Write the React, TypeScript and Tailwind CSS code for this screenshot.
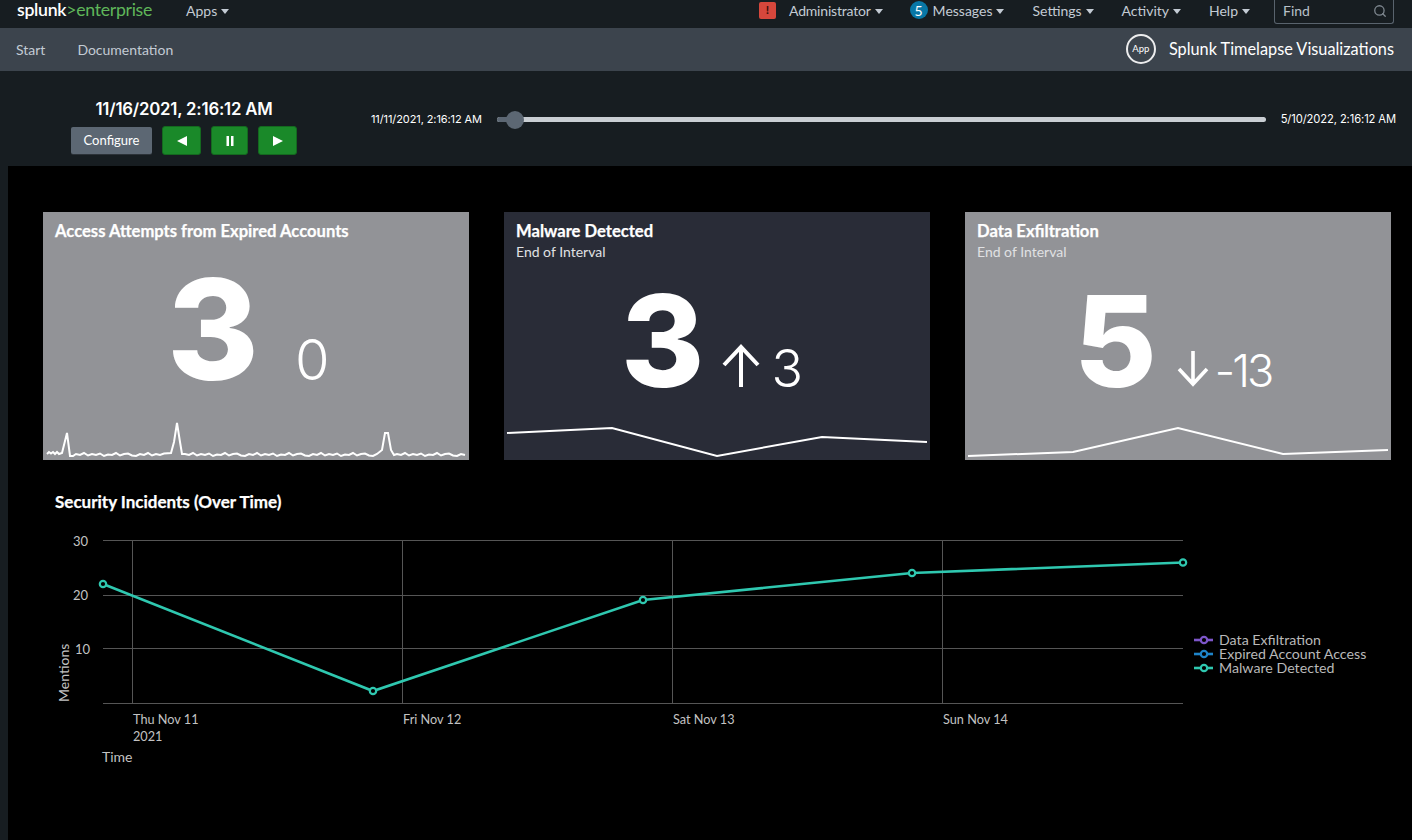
import type { ReactNode } from "react";
import { Search } from "lucide-react";

const navItems = ["Settings", "Activity"];

// noisy baseline between the spikes of the first sparkline
const wiggle = [34, 35, 33, 35.5, 34, 35, 33.5, 36, 34.5, 35, 33, 35.5, 34, 33.5, 35.5, 36];

function noise(from: number, to: number) {
  const out: string[] = [];
  let i = 0;
  for (let x = from; x < to; x += 4) {
    out.push(`L${x} ${wiggle[i % wiggle.length]}`);
    i += 1;
  }
  return out.join(" ");
}

const spike = [
  `M4 34 L6 32 L8 33.5 L10 32 L12 34 L14 32 L16 34 L19 33 L24 13 L27 36 L30 36`,
  noise(33, 124),
  `L128 33 L131 22 L134 3 L137 22 L139 34`,
  noise(142, 338),
  `L339 30 L342 13 L345 13 L348 30 L351 35`,
  noise(354, 424),
].join(" ");

function Caret() {
  return (
    <span className="inline-block w-0 h-0 ml-[4px] mb-[1px] border-x-[4px] border-x-transparent border-t-[5px] border-t-[#c3cbd4] align-middle" />
  );
}

function TopNav() {
  return (
    <header className="h-[28px] pb-[8px] bg-[#171d21] flex items-center pl-[17px] pr-[18px] text-[#c3cbd4] text-[14px]">
      <div className="text-[17.7px] leading-none tracking-[-0.3px] w-[169px]">
        <span className="text-white font-semibold">splunk</span>
        <span className="text-[#5fb65a]">&gt;enterprise</span>
      </div>
      <span>
        Apps
        <Caret />
      </span>
      <div className="ml-auto flex items-center">
        <span className="w-[17px] h-[17px] mr-[13px] rounded-[2px] bg-[#d6473c] text-[#3d0f0b] text-[12px] font-bold flex items-center justify-center">
          !
        </span>
        <span className="mr-[27px] tracking-[-0.2px]">
          Administrator
          <Caret />
        </span>
        <span className="w-[18px] h-[18px] mr-[5px] rounded-full bg-[#0877a6] text-white flex items-center justify-center text-[14px]">
          5
        </span>
        <span className="mr-[28px]">
          Messages
          <Caret />
        </span>
        {navItems.map((item) => (
          <span key={item} className="mr-[28px]">
            {item}
            <Caret />
          </span>
        ))}
        <span className="mr-[24px]">
          Help
          <Caret />
        </span>
        <div className="w-[120px] h-[24px] -mb-[4px] pb-[2px] border border-[#59636d] border-t-0 rounded-b-[3px] flex items-center justify-between pl-[8px] pr-[6px] text-[#b8c0c8]">
          Find
          <Search className="w-[14px] h-[14px] text-[#7f8890]" strokeWidth={2.2} />
        </div>
      </div>
    </header>
  );
}

function AppBar() {
  return (
    <nav className="h-[43px] pb-[1px] bg-[#3c444d] flex items-center pl-[16px] pr-[18px] text-[14px] text-[#c3cbd4]">
      <span className="mr-[32px]">Start</span>
      <span>Documentation</span>
      <div className="ml-auto flex items-center gap-[13px]">
        <span className="w-[30px] h-[30px] rounded-full border-2 border-white/90 text-white text-[9.5px] flex items-center justify-center">
          App
        </span>
        <span className="text-white text-[16.3px]">Splunk Timelapse Visualizations</span>
      </div>
    </nav>
  );
}

function Transport({ children, width }: { children: ReactNode; width: string }) {
  return (
    <button className={`${width} h-[29px] rounded-[3px] bg-[#1a8929] border border-[#14691f] flex items-center justify-center`}>
      {children}
    </button>
  );
}

function Controls() {
  return (
    <section className="h-[95px] bg-[#171d21] flex pl-[71px] pr-[16px]">
      <div className="w-[226px] pt-[28px] flex flex-col items-center">
        <div className="text-white font-['Inter',sans-serif] font-semibold text-[16.8px] leading-[20px] tracking-[-0.2px] whitespace-nowrap">
          11/16/2021, 2:16:12 AM
        </div>
        <div className="flex items-center mt-[7px] w-full">
          <button className="w-[81px] h-[27px] rounded-[2px] bg-[#5c6773] text-white text-[13px] shadow-[0_1px_0_#2c3238]">
            Configure
          </button>
          <div className="ml-[10px] flex gap-[10px]">
            <Transport width="w-[39px]">
              <svg width="10" height="10" viewBox="0 0 10 10">
                <path d="M0 5 L10 0 V10 Z" fill="#fff" />
              </svg>
            </Transport>
            <Transport width="w-[37px]">
              <svg width="8" height="10" viewBox="0 0 8 10">
                <path d="M0.5 0H3V10H0.5ZM5 0H7.5V10H5Z" fill="#fff" />
              </svg>
            </Transport>
            <Transport width="w-[39px]">
              <svg width="10" height="10" viewBox="0 0 10 10">
                <path d="M10 5 L0 0 V10 Z" fill="#fff" />
              </svg>
            </Transport>
          </div>
        </div>
      </div>
      <div className="flex-1 flex items-center h-[97px] pl-[74px] text-white font-['Inter',sans-serif] text-[11px] tracking-[-0.1px] whitespace-nowrap">
        <span>11/11/2021, 2:16:12 AM</span>
        <div className="flex-1 mx-[15px] h-[5px] rounded-full bg-[#c9ced3] relative">
          <span className="absolute left-[9px] top-[-6px] w-[18px] h-[18px] rounded-full bg-[#5c6773]" />
          <span className="absolute left-0 top-0 h-full w-[12px] rounded-l-full bg-[#5c6773]" />
        </div>
        <span className="text-[11.2px]">5/10/2022, 2:16:12 AM</span>
      </div>
    </section>
  );
}

function Panel({
  title,
  subtitle,
  bg,
  value,
  delta,
  arrow,
  spark,
  valueClass,
  deltaClass,
}: {
  title: string;
  subtitle?: string;
  bg: string;
  value: string;
  delta: string;
  arrow?: "up" | "down";
  spark: string;
  valueClass: string;
  deltaClass: string;
}) {
  return (
    <div className={`relative h-[248px] ${bg} overflow-hidden`}>
      <div className="pl-[12px] pt-[9px]">
        <div className="text-white font-bold text-[16.6px] leading-[21px] [-webkit-text-stroke:0.25px_white]">{title}</div>
        {subtitle && <div className="text-[#e0e1e3] text-[14px] leading-[20px]">{subtitle}</div>}
      </div>
      <div className={`absolute inset-x-0 flex items-baseline text-white ${valueClass}`}>
        <span className="font-['Inter',sans-serif] font-extrabold">{value}</span>
        <span className={`flex items-baseline font-light font-['Inter',sans-serif] ${deltaClass}`}>
          {arrow === "up" && (
            <svg className="w-[38px] h-[43px] mr-[11px]" viewBox="0 0 38 43" fill="none" stroke="#fff" strokeWidth="4">
              <path d="M19 43V3M2 21L19 3L36 21" />
            </svg>
          )}
          {arrow === "down" && (
            <svg className="w-[32px] h-[36px] mr-[6px]" viewBox="0 0 32 36" fill="none" stroke="#fff" strokeWidth="3.6">
              <path d="M16 0V33M2 18L16 33L30 18" />
            </svg>
          )}
          {delta}
        </span>
      </div>
      <svg className="absolute left-0 bottom-0 w-full h-[40px]" viewBox="0 0 426 40" fill="none" stroke="#fff" strokeWidth="2">
        <path d={spark} />
      </svg>
    </div>
  );
}

function Chart() {
  const ticks = [132.5, 402.5, 672.5, 942.5];
  const gridY = [540.5, 595.5, 648.5, 703.5];
  const points = [
    [103, 584],
    [373, 691],
    [643, 600],
    [912, 573],
    [1183, 562.5],
  ];
  const line = points.map((p) => p.join(",")).join(" ");
  return (
    <svg className="block absolute left-0 top-0" width="1412" height="840" viewBox="0 0 1412 840" fontFamily="Lato, sans-serif">
      {gridY.map((y) => (
        <line key={y} x1="103" x2="1183" y1={y} y2={y} stroke="#555" />
      ))}
      {ticks.map((x) => (
        <line key={x} x1={x} x2={x} y1="540" y2="703" stroke="#555" />
      ))}
      <polyline points={line} fill="none" stroke="#2fc8b0" strokeWidth="2.6" />
      {points.map(([x, y]) => (
        <circle key={x} cx={x} cy={y} r="3.2" fill="#000" stroke="#2fc8b0" strokeWidth="2.2" />
      ))}
      <g fill="#c3c3c3" fontSize="12.7">
        <text x="73" y="546" fontSize="13">30</text>
        <text x="73" y="600" fontSize="13">20</text>
        <text x="75" y="654" fontSize="13">10</text>
        <text x="133" y="724">Thu Nov 11</text>
        <text x="133" y="741">2021</text>
        <text x="403" y="724">Fri Nov 12</text>
        <text x="673" y="724">Sat Nov 13</text>
        <text x="943" y="724">Sun Nov 14</text>
        <text x="102" y="762" fontSize="14">Time</text>
        <text transform="translate(69 702) rotate(-90)" fontSize="14">Mentions</text>
      </g>
      {[
        { y: 640, c: "#7d56c9", t: "Data Exfiltration" },
        { y: 654, c: "#1e84c9", t: "Expired Account Access" },
        { y: 668, c: "#2fc8b0", t: "Malware Detected" },
      ].map((l) => (
        <g key={l.t}>
          <line x1="1194" x2="1213" y1={l.y} y2={l.y} stroke={l.c} strokeWidth="2.6" />
          <circle cx="1204" cy={l.y} r="3.2" fill="#000" stroke={l.c} strokeWidth="2.2" />
          <text x="1219" y={l.y + 4.5} fill="#b9b9b9" fontSize="14.2">
            {l.t}
          </text>
        </g>
      ))}
    </svg>
  );
}

export default function App() {
  return (
    <div className="relative w-[1412px] h-[840px] overflow-hidden bg-[#171d21] font-['Lato',sans-serif]">
      <TopNav />
      <AppBar />
      <Controls />
      <main className="relative ml-[8px] h-[674px] bg-black">
        <div className="grid grid-cols-3 gap-x-[35px] pt-[46px] pl-[35px] pr-[21px]">
          <Panel
            title="Access Attempts from Expired Accounts"
            bg="bg-[#929397]"
            value="3"
            delta="0"
            spark={spike}
            valueClass="top-[22px] pl-[124px] text-[140px] leading-[190px]"
            deltaClass="ml-[36px] text-[56px]"
          />
          <Panel
            title="Malware Detected"
            subtitle="End of Interval"
            bg="bg-[#292c37]"
            value="3"
            delta="3"
            arrow="up"
            spark="M3 13 L108 8 L213 36 L318 17 L423 22"
            valueClass="top-[44px] pl-[117px] text-[127px] leading-[170px]"
            deltaClass="ml-[18px] text-[52px]"
          />
          <Panel
            title="Data Exfiltration"
            subtitle="End of Interval"
            bg="bg-[#929397]"
            value="5"
            delta="-13"
            arrow="down"
            spark="M3 36 L108 32 L213 8 L318 34 L423 30"
            valueClass="top-[44px] pl-[109px] text-[127px] leading-[170px]"
            deltaClass="ml-[20px] text-[45px] tracking-[-3px]"
          />
        </div>
        <h2 className="pl-[47px] pt-[32px] text-white font-bold text-[17px] leading-[20px] [-webkit-text-stroke:0.25px_white]">
          Security Incidents (Over Time)
        </h2>
      </main>
      <Chart />
    </div>
  );
}
